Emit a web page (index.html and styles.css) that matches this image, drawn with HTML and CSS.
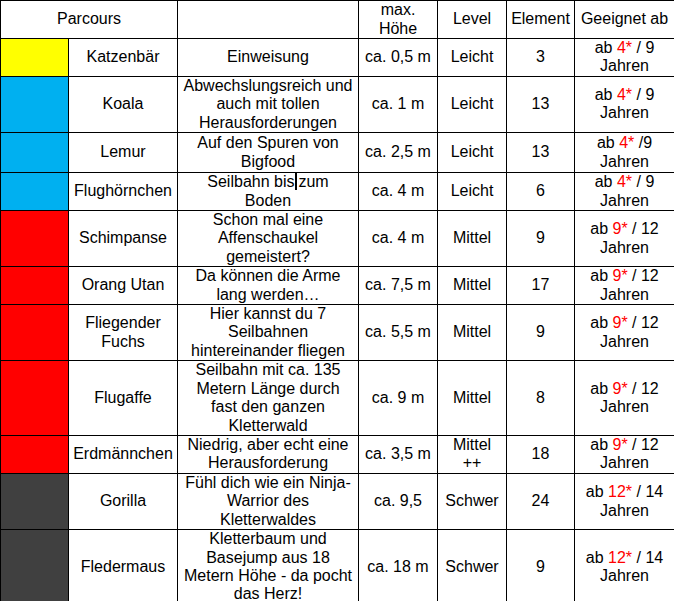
FILE: index.html
```html
<!DOCTYPE html>
<html lang="de">
<head>
<meta charset="utf-8">
<title>Parcours</title>
<link rel="stylesheet" href="styles.css">
</head>
<body>
<table class="parcours">
  <colgroup>
    <col class="c-color">
    <col class="c-name">
    <col class="c-desc">
    <col class="c-height">
    <col class="c-level">
    <col class="c-elem">
    <col class="c-age">
  </colgroup>
  <tr class="h38">
    <td colspan="2">Parcours</td>
    <td></td>
    <td>max.<br>Höhe</td>
    <td>Level</td>
    <td>Element</td>
    <td>Geeignet ab</td>
  </tr>
  <tr class="h37">
    <td class="sw yellow"></td>
    <td>Katzenbär</td>
    <td>Einweisung</td>
    <td>ca. 0,5 m</td>
    <td>Leicht</td>
    <td>3</td>
    <td>ab <span class="red">4*</span> / 9<br>Jahren</td>
  </tr>
  <tr class="h56">
    <td class="sw blue"></td>
    <td>Koala</td>
    <td>Abwechslungsreich und<br>auch mit tollen<br>Herausforderungen</td>
    <td>ca. 1 m</td>
    <td>Leicht</td>
    <td>13</td>
    <td>ab <span class="red">4*</span> / 9<br>Jahren</td>
  </tr>
  <tr class="h40">
    <td class="sw blue"></td>
    <td>Lemur</td>
    <td>Auf den Spuren von<br>Bigfood</td>
    <td>ca. 2,5 m</td>
    <td>Leicht</td>
    <td>13</td>
    <td>ab <span class="red">4*</span> /9<br>Jahren</td>
  </tr>
  <tr class="h38">
    <td class="sw blue"></td>
    <td>Flughörnchen</td>
    <td>Seilbahn bis<span class="caret"></span>zum<br>Boden</td>
    <td>ca. 4 m</td>
    <td>Leicht</td>
    <td>6</td>
    <td>ab <span class="red">4*</span> / 9<br>Jahren</td>
  </tr>
  <tr class="h56">
    <td class="sw red-bg"></td>
    <td>Schimpanse</td>
    <td>Schon mal eine<br>Affenschaukel<br>gemeistert?</td>
    <td>ca. 4 m</td>
    <td>Mittel</td>
    <td>9</td>
    <td>ab <span class="red">9*</span> / 12<br>Jahren</td>
  </tr>
  <tr class="h37">
    <td class="sw red-bg"></td>
    <td>Orang Utan</td>
    <td>Da können die Arme<br>lang werden…</td>
    <td>ca. 7,5 m</td>
    <td>Mittel</td>
    <td>17</td>
    <td>ab <span class="red">9*</span> / 12<br>Jahren</td>
  </tr>
  <tr class="h56">
    <td class="sw red-bg"></td>
    <td>Fliegender<br>Fuchs</td>
    <td>Hier kannst du 7<br>Seilbahnen<br>hintereinander fliegen</td>
    <td>ca. 5,5 m</td>
    <td>Mittel</td>
    <td>9</td>
    <td>ab <span class="red">9*</span> / 12<br>Jahren</td>
  </tr>
  <tr class="h74">
    <td class="sw red-bg"></td>
    <td>Flugaffe</td>
    <td>Seilbahn mit ca. 135<br>Metern Länge durch<br>fast den ganzen<br>Kletterwald</td>
    <td>ca. 9 m</td>
    <td>Mittel</td>
    <td>8</td>
    <td>ab <span class="red">9*</span> / 12<br>Jahren</td>
  </tr>
  <tr class="h38">
    <td class="sw red-bg"></td>
    <td>Erdmännchen</td>
    <td>Niedrig, aber echt eine<br>Herausforderung</td>
    <td>ca. 3,5 m</td>
    <td>Mittel<br>++</td>
    <td>18</td>
    <td>ab <span class="red">9*</span> / 12<br>Jahren</td>
  </tr>
  <tr class="h56">
    <td class="sw grey"></td>
    <td>Gorilla</td>
    <td>Fühl dich wie ein Ninja-<br>Warrior des<br>Kletterwaldes</td>
    <td>ca. 9,5</td>
    <td>Schwer</td>
    <td>24</td>
    <td>ab <span class="red">12*</span> / 14<br>Jahren</td>
  </tr>
  <tr class="h74">
    <td class="sw grey"></td>
    <td>Fledermaus</td>
    <td>Kletterbaum und<br>Basejump aus 18<br>Metern Höhe - da pocht<br>das Herz!</td>
    <td>ca. 18 m</td>
    <td>Schwer</td>
    <td>9</td>
    <td>ab <span class="red">12*</span> / 14<br>Jahren</td>
  </tr>
</table>
</body>
</html>
```
FILE: styles.css
```css
html, body {
  margin: 0;
  padding: 0;
  background: #ffffff;
}

.parcours {
  width: 674px;
  table-layout: fixed;
  border-collapse: collapse;
  font-family: "Liberation Sans", Arial, sans-serif;
  font-size: 16px;
  line-height: 18.4px;
  color: #000000;
}

.c-color { width: 68px; }
.c-name { width: 109px; }
.c-desc { width: 181px; }
.c-height { width: 79px; }
.c-level { width: 69px; }
.c-elem { width: 68px; }
.c-age { width: 100px; }

.parcours td {
  border: 1px solid #000000;
  padding: 0;
  text-align: center;
  vertical-align: middle;
  white-space: nowrap;
  overflow: hidden;
}

.h37 { height: 37px; }
.h38 { height: 38px; }
.h40 { height: 40px; }
.h56 { height: 56px; }
.h74 { height: 74px; }

.sw.yellow { background: #ffff00; }
.sw.blue { background: #00b0f0; }
.sw.red-bg { background: #ff0000; }
.sw.grey { background: #404040; }

.red { color: #ff0000; }

.caret {
  display: inline-block;
  width: 2px;
  height: 17px;
  background: #000000;
  vertical-align: -3px;
  margin: 0 1px;
}
```
